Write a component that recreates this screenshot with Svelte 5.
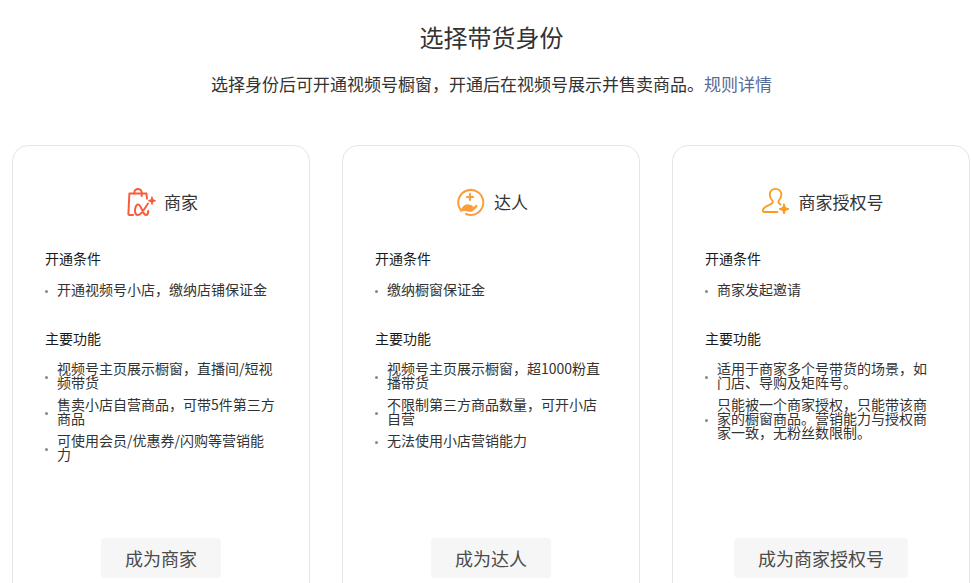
<script>
	const roles = [
		{
			name: '商家',
			icon: 'shop',
			conditions: ['开通视频号小店，缴纳店铺保证金'],
			features: [
				'视频号主页展示橱窗，直播间/短视频带货',
				'售卖小店自营商品，可带5件第三方商品',
				'可使用会员/优惠券/闪购等营销能力'
			],
			action: '成为商家'
		},
		{
			name: '达人',
			icon: 'talent',
			conditions: ['缴纳橱窗保证金'],
			features: [
				'视频号主页展示橱窗，超1000粉直播带货',
				'不限制第三方商品数量，可开小店自营',
				'无法使用小店营销能力'
			],
			action: '成为达人'
		},
		{
			name: '商家授权号',
			icon: 'auth',
			conditions: ['商家发起邀请'],
			features: [
				'适用于商家多个号带货的场景，如门店、导购及矩阵号。',
				'只能被一个商家授权，只能带该商家的橱窗商品。营销能力与授权商家一致，无粉丝数限制。'
			],
			action: '成为商家授权号'
		}
	];
</script>

<div class="page">
	<h1 class="title">选择带货身份</h1>
	<p class="intro">选择身份后可开通视频号橱窗，开通后在视频号展示并售卖商品。<span class="link">规则详情</span></p>

	<div class="cards">
		{#each roles as role}
			<section class="card">
				<header class="card-head">
					{#if role.icon === 'shop'}
						<svg width="30" height="30" viewBox="0 0 30 30" fill="none" stroke="#fa5b3c" stroke-width="2" stroke-linecap="round" stroke-linejoin="round">
							<path d="M7 28H3.4C2.7 28 2.3 27.5 2.4 26.8L3.4 6.5H20.5L20.9 11.5" />
							<path d="M8.3 6.5V5.5C8.3 3.5 10 2 12 2C14 2 15.7 3.5 15.7 5.5V9" />
							<path d="M22 16.5C19.5 20 15.5 28 12 28C10 28 9 26 9 23.5C9 20 10.5 17.5 12 17.5C15.5 17.5 16.5 28 20 28C21.5 28 22.2 26.5 22.2 24" />
							<path d="M26 10L27 12.7L29.6 13.7L27 14.7L26 17.4L25 14.7L22.4 13.7L25 12.7Z" fill="#fa5b3c" stroke-width="1" />
						</svg>
					{:else if role.icon === 'talent'}
						<svg width="30" height="30" viewBox="0 0 30 30" fill="none" stroke="#fa9d3b" stroke-width="2" stroke-linecap="round" stroke-linejoin="round">
							<path d="M4.8 23A12.5 12.5 0 1 1 10 27" />
							<path d="M14 7V13M11 10H17" stroke-width="2.2" />
							<path d="M4.5 24L7 20C8.5 18 11 17.5 13 18L16 19C17.5 19.5 17 21 15.5 21H13H17L20 18.5C21 18 21.5 19 20.8 20L17 23.5C15.5 24.5 13.5 24.5 12 24L8.5 23.5Z" fill="#fa9d3b" stroke-width="1" />
						</svg>
					{:else}
						<svg width="30" height="30" viewBox="0 0 30 30" fill="none" stroke="#fa9d1e" stroke-width="1.8" stroke-linecap="round" stroke-linejoin="round">
							<path d="M19.5 17.5C18.5 16.8 17.5 16 17.3 15C17.2 14.3 17.6 13.8 18.2 13C19.5 11.5 20.3 9.5 20.3 7.5C20.3 4.2 17.8 1.8 14.5 1.8C11.2 1.8 8.8 4.2 8.8 7.5C8.8 9.5 9.5 11.5 10.9 13C11.5 13.7 11.9 14.3 11.8 15C11.6 16.3 10.3 17.1 8.5 17.8C5.5 19 2 20.5 1.8 23.5C1.7 24.6 2.4 25 3.2 25H16.5" />
							<path d="M23 17L24.4 20.6L28 22L24.4 23.4L23 27L21.6 23.4L18 22L21.6 20.6Z" fill="#fa9d1e" stroke-width="1" />
						</svg>
					{/if}
					<span class="card-name">{role.name}</span>
				</header>

				<h2 class="label">开通条件</h2>
				<ul class="list list-conditions">
					{#each role.conditions as item}
						<li>{item}</li>
					{/each}
				</ul>

				<h2 class="label label-features">主要功能</h2>
				<ul class="list">
					{#each role.features as item}
						<li>{item}</li>
					{/each}
				</ul>

				<div class="action">
					<button class="btn" type="button">{role.action}</button>
				</div>
			</section>
		{/each}
	</div>
</div>

<style>
	:global(body) {
		background: #fff;
		overflow: hidden;
	}

	.page {
		height: 583px;
		overflow: hidden;
		box-sizing: border-box;
		padding: 21px 0 0 12px;
		font-family: 'Noto Sans CJK SC', 'Liberation Sans', sans-serif;
		color: #333;
	}

	.title {
		margin: 0;
		font-size: 24px;
		line-height: 32px;
		font-weight: 400;
		text-align: center;
	}

	.intro {
		margin: 19px 0 0;
		font-size: 17px;
		line-height: 24px;
		text-align: center;
	}

	.link {
		color: #576b95;
	}

	.cards {
		display: flex;
		gap: 32px;
		margin-top: 49px;
	}

	.card {
		display: flex;
		flex-direction: column;
		flex: 0 0 298px;
		box-sizing: border-box;
		height: 480px;
		padding: 0 32px 46px;
		border: 1px solid #e5e5e5;
		border-radius: 16px;
	}

	.card-head {
		display: flex;
		align-items: center;
		justify-content: center;
		gap: 8px;
		height: 30px;
		margin-top: 41px;
		padding-left: 2px;
	}

	.card-name {
		font-size: 17px;
		line-height: 24px;
	}

	.label {
		margin: 31px 0 0;
		font-size: 14px;
		line-height: 20px;
		font-weight: 400;
		color: #1a1a1a;
	}

	.label-features {
		margin-top: 24px;
	}

	.list {
		margin: 13px 0 0;
		padding: 0;
		list-style: none;
	}

	.list-conditions {
		margin-top: 14px;
	}

	.list li {
		position: relative;
		margin-bottom: 8px;
		padding-left: 12px;
		font-size: 14px;
		line-height: 14px;
		color: #333;
	}

	.list li::before {
		content: '';
		position: absolute;
		left: 0;
		top: calc(50% + 1px);
		width: 3px;
		height: 3px;
		border-radius: 50%;
		background: #888;
	}

	.action {
		display: flex;
		justify-content: center;
		margin-top: auto;
	}

	.btn {
		height: 40px;
		padding: 0 24px;
		border: 0;
		border-radius: 4px;
		background: #f6f6f6;
		font-family: inherit;
		font-size: 18px;
		color: #4a4a4a;
	}
</style>
